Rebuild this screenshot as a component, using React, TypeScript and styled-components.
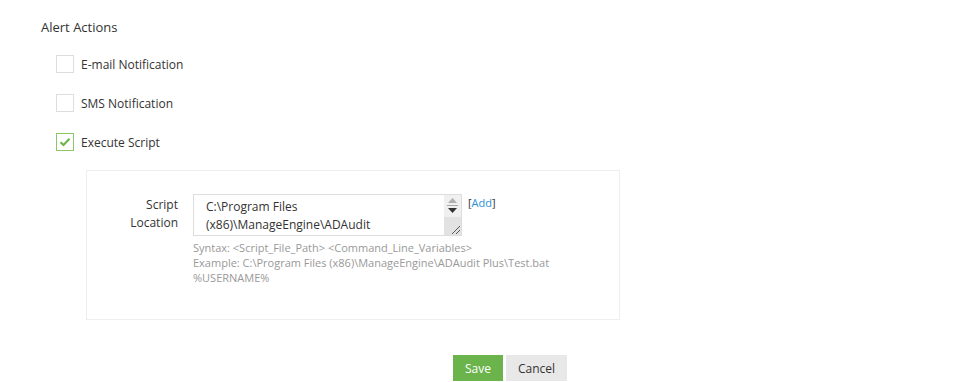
import React from "react";
import styled, { createGlobalStyle } from "styled-components";

const Global = createGlobalStyle`
  html, body { margin: 0; padding: 0; background: #fff; }
  body { font-family: "Open Sans", "Liberation Sans", sans-serif; color: #333; }
`;

const Page = styled.div`
  width: 956px;
  height: 382px;
  box-sizing: border-box;
  padding: 18px 0 0 41px;
  display: flex;
  flex-direction: column;
`;

const Title = styled.div`
  font-size: 13px;
  line-height: 18px;
  color: #333;
`;

const Options = styled.div`
  display: flex;
  flex-direction: column;
  gap: 21px;
  margin: 19px 0 0 15px;
`;

const OptionRow = styled.label`
  display: flex;
  align-items: center;
  gap: 7px;
  font-size: 12px;
  color: #333;
  height: 18px;
`;

const Box = styled.span<{ $checked?: boolean }>`
  width: 18px;
  height: 18px;
  box-sizing: border-box;
  border: 1px solid ${(p) => (p.$checked ? "#8cc66b" : "#ddd")};
  background: #fff;
  display: flex;
  align-items: center;
  justify-content: center;
`;

const Panel = styled.div`
  margin: 19px 0 0 45px;
  width: 534px;
  height: 150px;
  box-sizing: border-box;
  border: 1px solid #eeeeee;
  padding: 23px 0 0 0;
  display: flex;
`;

const FieldLabel = styled.div`
  width: 91px;
  text-align: right;
  font-size: 12px;
  line-height: 18px;
  color: #333;
  padding-top: 2px;
`;

const FieldBody = styled.div`
  margin-left: 15px;
  display: flex;
  flex-direction: column;
`;

const InputRow = styled.div`
  display: flex;
  align-items: flex-start;
  gap: 6px;
`;

const AreaWrap = styled.div`
  position: relative;
  width: 269px;
  height: 42px;
`;

const Area = styled.textarea`
  display: block;
  width: 269px;
  height: 42px;
  box-sizing: border-box;
  border: 1px solid #ddd;
  padding: 3px 29px 3px 12px;
  margin: 0;
  font-family: "Open Sans", "Liberation Sans", sans-serif;
  font-size: 12px;
  line-height: 18px;
  color: #333;
  resize: none;
  outline: none;
  overflow: hidden;
`;

const ScrollBar = styled.div`
  position: absolute;
  top: 1px;
  right: 1px;
  bottom: 1px;
  width: 17px;
  display: flex;
  flex-direction: column;
  background: #f0f0f0;
  pointer-events: none;
`;

const ArrowZone = styled.div`
  height: 22px;
  display: flex;
  flex-direction: column;
  align-items: center;
  padding-top: 3px;
  box-sizing: border-box;
  gap: 2px;
`;

const Sep = styled.div`
  width: 11px;
  height: 1px;
  background: #a8a8a8;
`;

const Grip = styled.div`
  flex: 1;
  background-color: #e2e2e2;
  background-image: radial-gradient(#cfcfcf 0.6px, transparent 0.7px);
  background-size: 2px 2px;
  display: flex;
  align-items: flex-end;
  justify-content: flex-end;
`;

const AddLink = styled.span`
  font-size: 11px;
  color: #333;
  line-height: 18px;
  a { color: #2d8fd5; text-decoration: none; }
`;

const Help = styled.div`
  margin-top: 4px;
  font-size: 11px;
  line-height: 15px;
  color: #999;
`;

const Buttons = styled.div`
  display: flex;
  gap: 3px;
  margin: 35px 0 0 412px;
`;

const Btn = styled.button<{ $primary?: boolean }>`
  height: 26px;
  border: none;
  padding: 0 12px;
  font-family: "Open Sans", "Liberation Sans", sans-serif;
  font-size: 12px;
  background: ${(p) => (p.$primary ? "#6ab44b" : "#e8e8e8")};
  color: ${(p) => (p.$primary ? "#fff" : "#333")};
  cursor: pointer;
`;

const Check = () => (
  <svg width="12" height="10" viewBox="0 0 12 10">
    <path d="M1.5 5.2 L4.5 8 L10.5 1.8" fill="none" stroke="#6ab44b" strokeWidth="2" />
  </svg>
);

export default function App() {
  return (
    <>
      <Global />
      <Page>
        <Title>Alert Actions</Title>
        <Options>
          <OptionRow><Box />E-mail Notification</OptionRow>
          <OptionRow><Box />SMS Notification</OptionRow>
          <OptionRow><Box $checked><Check /></Box>Execute Script</OptionRow>
        </Options>
        <Panel>
          <FieldLabel>Script<br />Location</FieldLabel>
          <FieldBody>
            <InputRow>
              <AreaWrap>
                <Area
                  spellCheck
                  defaultValue={"C:\\Program Files (x86)\\ManageEngine\\ADAudit Plus\\Test.bat %USERNAME%"}
                />
                <ScrollBar>
                  <ArrowZone>
                    <svg width="9" height="5" viewBox="0 0 9 5"><path d="M0 5 L4.5 0 L9 5 Z" fill="#b0b0b0" /></svg>
                    <Sep />
                    <svg width="9" height="5" viewBox="0 0 9 5"><path d="M0 0 L9 0 L4.5 5 Z" fill="#333" /></svg>
                  </ArrowZone>
                  <Grip>
                    <svg width="12" height="12" viewBox="0 0 12 12">
                      <path d="M11 3 L3 11 M11 7 L7 11" stroke="#555" strokeWidth="1" />
                    </svg>
                  </Grip>
                </ScrollBar>
              </AreaWrap>
              <AddLink>[<a href="#">Add</a>]</AddLink>
            </InputRow>
            <Help>
              Syntax: &lt;Script_File_Path&gt; &lt;Command_Line_Variables&gt;
              <br />
              Example: C:\Program Files (x86)\ManageEngine\ADAudit Plus\Test.bat
              <br />
              %USERNAME%
            </Help>
          </FieldBody>
        </Panel>
        <Buttons>
          <Btn $primary>Save</Btn>
          <Btn>Cancel</Btn>
        </Buttons>
      </Page>
    </>
  );
}
